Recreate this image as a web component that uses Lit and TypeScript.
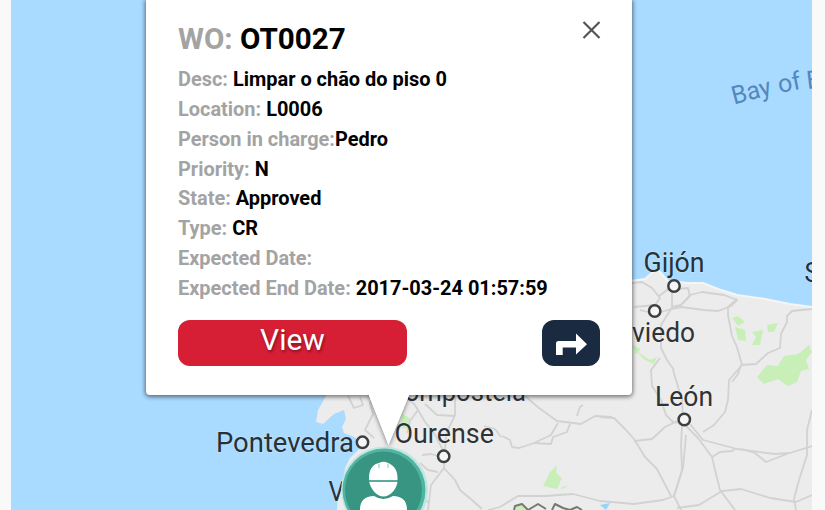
import { LitElement, html, css, svg } from "lit";
import { customElement, property } from "lit/decorators.js";

interface City { name: string; x: number; y: number; width: number; dot?: [number, number]; coastal?: boolean; }

const CITIES: City[] = [
  { name: "Gijón", x: 643.5, y: 272, width: 61, dot: [674, 286], coastal: true },
  { name: "Oviedo", x: 614, y: 342, width: 81, dot: [654.7, 311] },
  { name: "León", x: 655, y: 406, width: 58, dot: [684.3, 419.5] },
  { name: "Ourense", x: 394.5, y: 442.8, width: 99.5, dot: [443.7, 456.3] },
  { name: "Compostela", x: 388, y: 401, width: 138 },
  { name: "Pontevedra", x: 216, y: 451.8, width: 138, dot: [362.5, 442.3], coastal: true },
  { name: "Vigo", x: 328.5, y: 500.5, width: 50, coastal: true },
  { name: "Santander", x: 804.5, y: 282, width: 116, coastal: true },
];

const ROADS = [
  "M632 283 642 282 652 288 660 298 655 305 634 307",
  "M659 296 667 290 688 288 690 296 681 305 672 307 672 290",
  "M681 305 690 295 702 292 724 295 737 300 731 306 718 311 704 310 681 307 671 309 655 314 640 310",
  "M737 299 728 307 728 315 732 336 737 347 742 365 756 364 768 353 780 348 781 334 787 322 787 316 792 311 812 309",
  "M671 309 661 325 661 348 667 360 674 370",
  "M660 358 651 370 652 386 661 400 666 415 673 422 682 423",
  "M673 370 676 380 682 400 683 420",
  "M742 365 729 380 728 400 725 412 714 425 703 432",
  "M741 365 738 374 732 382",
  "M683 423 698 438 712 457 716 474 720 490 735 510",
  "M690 424 703 440 737 449 775 454 790 453 812 446",
  "M812 410 807 430 807 455 799 480 794 499 796 510",
  "M812 495 796 502 770 498 741 489 722 491 699 505 677 508",
  "M682 426 681 445 682 470 674 496 681 510",
  "M686 435 683 468 674 496 663 500 634 504 600 501 573 494 545 496 518 496 500 507 488 510",
  "M600 417 614 418 626 430 634 439 645 457 657 469 671 496",
  "M634 441 652 439 665 427 684 418",
  "M525 396 539 408 557 421 581 424 595 416 612 417",
  "M558 423 551 435 534 443 519 448 512 447 510 440 502 436",
  "M534 443 551 444 553 437 567 432 570 424",
  "M577 416 580 407 583 405",
  "M712 457 720 452 732 451 735 449",
  "M742 449 755 453 766 462 787 454",
  "M405 396 415 405 425 422 434 433 443 450",
  "M455 396 455 415 446 434 444 468 431 485 428 510",
  "M444 468 455 480 460 490 472 500 482 509",
  "M378 396 370 403 373 414 365 430 374 438",
  "M348 396 354 408 363 405 360 397",
  "M422 455 431 454 444 458",
  "M425 404 437 415 455 416 M418 410 410 421 407 433",
  "M484 426 495 429 501 437",
  "M420 463 428 470 438 472 M418 490 422 501 430 502",
];

const WOODS = [
  "M732 318 738 316 745 322 738 326z",
  "M735 327 745 330 746 341 738 340z",
  "M752 332 763 330 760 345 752 345 756 337z",
  "M767 325 778 323 774 332 768 332z",
  "M757 377 767 365 778 366 784 356 798 354 809 345 812 352 806 360 809 369 801 371 797 382 788 386 778 379 764 384z",
  "M632 345 641 349 636 354z M635 350 650 360 657 357 654 364 645 360z",
  "M543 486 550 472 557 465 556 473 562 478 557 489z M560 488 569 485 563 489z",
  "M402 414 410 418 409 429 401 428z",
  "M514 508 520 504 527 509 524 510 514 510z",
];

@customElement("city-map")
export class CityMap extends LitElement {
  static styles = css`
    :host { display: block; height: 100%; }
    svg { display: block; width: 100%; height: 100%; }
    .land { fill: #ececec; }
    .shore { fill: none; stroke: #f5f5f4; stroke-width: 2; stroke-linejoin: round; }
    .road { fill: none; stroke: #d2d2d2; stroke-width: 1.8; stroke-linejoin: round; }
    .wood { fill: #c8efb8; }
    .border { fill: none; stroke: #77796f; stroke-width: 2; stroke-linejoin: round; }
    .lake { fill: #9ad3fa; }
    .name { font: 400 27px Roboto, sans-serif; fill: #303336; stroke: #fff; stroke-opacity: .2; stroke-width: 2px; paint-order: stroke; }
    .coastal { fill: #263238; }
    .dot { fill: #f5f5f5; stroke: #3c3f40; stroke-width: 2.5; }
    .bay { font: 400 25px Roboto, sans-serif; fill: #5387be; }
  `;

  render() {
    return html`<svg viewBox="11 0 801 510" preserveAspectRatio="none">
      <path class="land" d="M331 386 326 396 318 410 316 422 323 424 334 414 344 410 346 419 342 427 344 433 352 436 359 440 360 448 350 458 345 468 343 480 338 492 337 510H812V307L790 304 765 299 737 295 718 289 703 283 688 283 668 281 659 271 654 271 645 279 630 281z"/>
      <path class="shore" d="M630 281 645 279 654 271 659 271 668 281 688 283 703 283 718 289 737 295 765 299 790 304 812 307"/>
      ${WOODS.map((d) => svg`<path class="wood" d=${d} />`)}
      ${ROADS.map((d) => svg`<path class="road" d=${d} />`)}
      <path class="lake" d="M600 505 610 503 606 510z"/>
      <path class="border" d="M514 510 515 506 522 504 528 510 538 504 546 509 M552 510 555 504 563 508 570 510 577 507 582 510"/>
      ${CITIES.map((c) => svg`
        <text class="name ${c.coastal ? "coastal" : ""}" x=${c.x} y=${c.y} textLength=${c.width} lengthAdjust="spacingAndGlyphs">${c.name}</text>
        ${c.dot ? svg`<circle class="dot" cx=${c.dot[0]} cy=${c.dot[1]} r="5.7" />` : ""}`)}
      <text class="bay" transform="translate(734 104.5) rotate(-15)" textLength="40" lengthAdjust="spacingAndGlyphs">Bay</text>
      <text class="bay" transform="translate(779.5 93) rotate(-11)">of</text>
      <text class="bay" transform="translate(807.5 89) rotate(-7)">Biscay</text>
    </svg>`;
  }
}

@customElement("worker-pin")
export class WorkerPin extends LitElement {
  static styles = css`
    :host { display: block; }
    svg { display: block; width: 100%; height: 100%; }
    .halo { fill: #bfe7df; }
    .rim { fill: #4fb5a2; }
    .disc { fill: #379582; }
    .figure { fill: #fff; }
    .brim { fill: none; stroke: #379582; stroke-width: 1.6; }
    .vent { fill: none; stroke: #a3d0c6; stroke-width: 1.2; }
  `;

  render() {
    return html`<svg viewBox="0 0 88 66">
      <circle class="halo" cx="44.500" cy="46" r="43.500"/>
      <circle class="rim" cx="44" cy="46" r="41.500"/>
      <circle class="disc" cx="43.500" cy="46" r="38.500"/>
      <path class="figure" d="M29 36.500V34C29 24 34 20 39 19Q43.500 16.500 48 19C53 21 57.500 25 57.500 34V36.500C57.500 45 50 52.500 43.500 52.500C37 52.500 30 45 29 36.500z"/>
      <path class="figure" d="M20 66C20 56 25 52.500 34 52Q43.500 58 53 52C62 52.500 67 56 67 66z"/>
      <path class="brim" d="M28 37H59"/>
      <path class="vent" d="M39 20V24M48 20V24"/>
    </svg>`;
  }
}

@customElement("order-card")
export class OrderCard extends LitElement {
  @property() number = "";
  @property({ attribute: false }) fields: [string, string][] = [];

  static styles = css`
    :host { display: block; position: relative; box-sizing: border-box; background: #fff; padding: 18px 32px 0; border-radius: 0 0 4px 4px; box-shadow: 0 1px 4px 1px rgba(0, 0, 0, .5); font-family: Roboto, sans-serif; font-weight: 700; color: #000; }
    .title { font-size: 29.600px; line-height: 43px; height: 47.200px; white-space: pre; }
    .row { font-size: 19.940px; line-height: 29.800px; height: 29.800px; white-space: pre; }
    .label { color: #a3a3a3; }
    .actions { display: flex; justify-content: space-between; margin-top: 16.400px; }
    .view { width: 229px; height: 46px; box-sizing: border-box; padding: 0 0 6px; border: 0; border-radius: 12px; background: #d61e35; color: #fff; font: 400 30px/40px Roboto, sans-serif; text-shadow: 1px 2px 3px rgba(0, 0, 0, .4); }
    .go { width: 58px; height: 46px; padding: 0; border: 0; border-radius: 12px; background: #1a2a40; }
    .go svg { display: block; width: 58px; height: 46px; }
    .arrow { fill: #fff; }
    .close { position: absolute; top: 20px; right: 30px; width: 20px; height: 20px; padding: 0; border: 0; background: none; }
    .close svg { display: block; }
    .cross { fill: none; stroke: #555; stroke-width: 2.200; }
  `;

  render() {
    return html`
      <button class="close" aria-label="Close"><svg width="20" height="20"><path class="cross" d="M1.500 2 17.500 18M17.500 2 1.500 18"/></svg></button>
      <div class="title"><span class="label">WO: </span><span>${this.number}</span></div>
      ${this.fields.map(([label, value]) => html`<div class="row"><span class="label">${label}</span><span>${value}</span></div>`)}
      <div class="actions">
        <button class="view">View</button>
        <button class="go" aria-label="Directions"><svg viewBox="0 0 58 46"><path class="arrow" d="M14 35V23.500Q14 21 16.500 21H34V13.500L45 24.200 34 34.500V27.500H20.700V35z"/></svg></button>
      </div>`;
  }
}

@customElement("app-root")
export class AppRoot extends LitElement {
  static styles = css`
    :host { display: block; height: 510px; box-sizing: border-box; padding: 0 13px 0 11px; background: #f9f9f9; overflow: hidden; }
    .stage { position: relative; height: 100%; background: #a9daff; overflow: hidden; }
    .card { position: absolute; left: 135px; top: 0; width: 485.500px; height: 395px; clip-path: inset(0 -10px -10px -10px); }
    .tail { position: absolute; left: 357px; top: 393px; width: 42px; height: 52px; overflow: visible; }
    .tail path { fill: #fff; }
    .shade { filter: drop-shadow(0 2px 2px rgba(0, 0, 0, .45)); clip-path: inset(2.500px -10px -10px -10px); }
    .pin { position: absolute; left: 329px; top: 444px; width: 88px; height: 66px; }
  `;

  private fields: [string, string][] = [
    ["Desc: ", "Limpar o chão do piso 0"],
    ["Location: ", "L0006"],
    ["Person in charge:", "Pedro"],
    ["Priority: ", "N"],
    ["State: ", "Approved"],
    ["Type: ", "CR"],
    ["Expected Date:", ""],
    ["Expected End Date: ", "2017-03-24 01:57:59"],
  ];

  render() {
    return html`<div class="stage">
      <city-map></city-map>
      <worker-pin class="pin"></worker-pin>
      <order-card class="card" number="OT0027" .fields=${this.fields}></order-card>
      <svg class="tail" viewBox="0 0 42 52"><g class="shade"><path d="M0 0H42L20.500 52z"/></g><path d="M0 0H42L20.500 52z"/></svg>
    </div>`;
  }
}
